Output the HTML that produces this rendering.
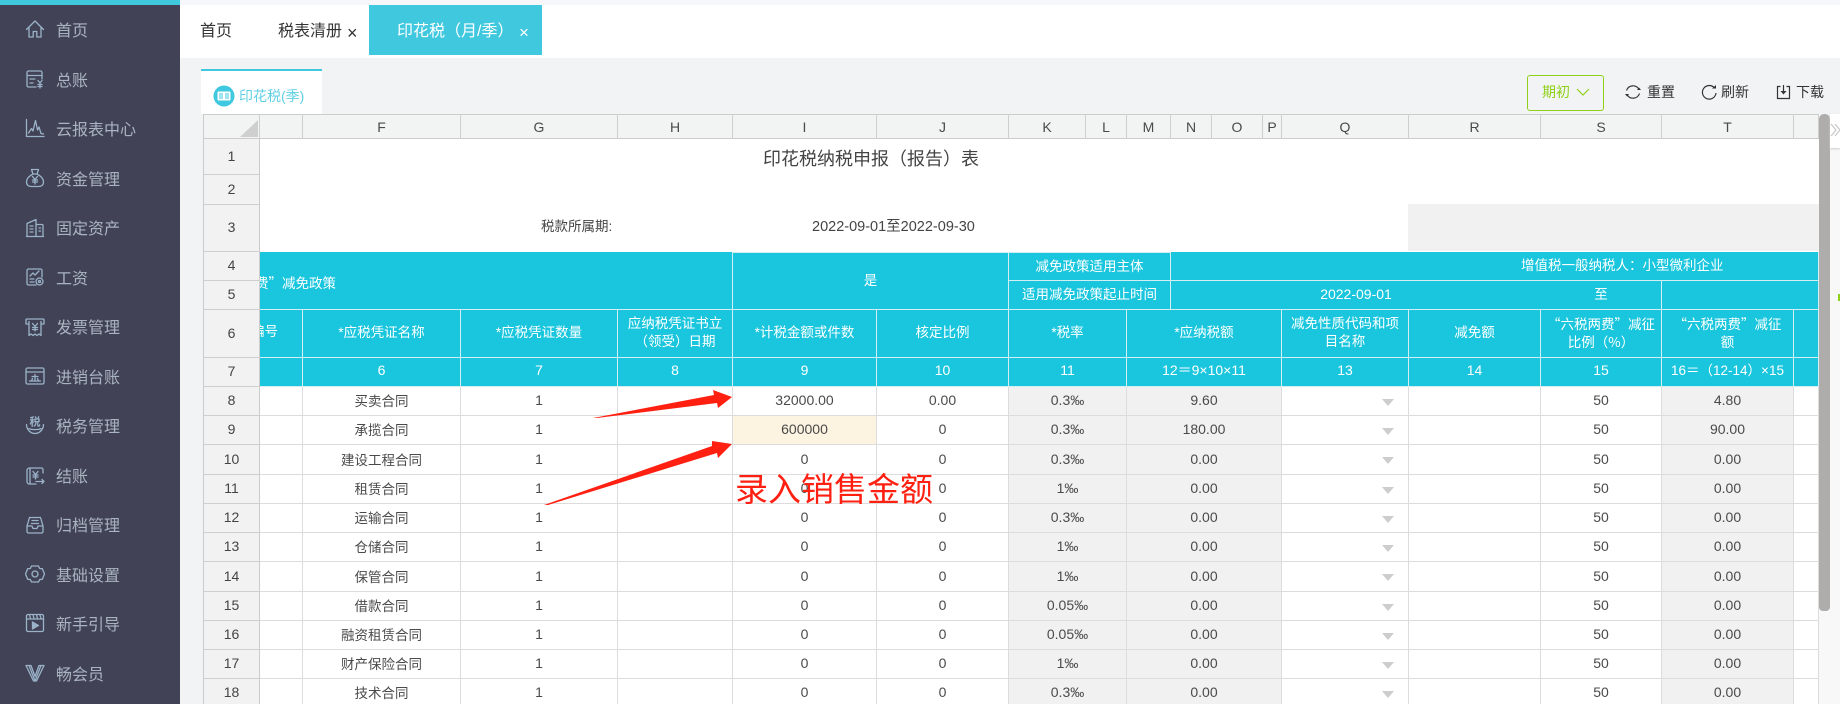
<!DOCTYPE html>
<html lang="zh-CN">
<head>
<meta charset="utf-8">
<title>印花税纳税申报（报告）表</title>
<style>
html,body{margin:0;padding:0;width:1840px;height:704px;overflow:hidden;background:#f2f3f5;font-family:"Liberation Sans","Noto Sans CJK SC",sans-serif;color:#444}
.abs{position:absolute;white-space:nowrap}
#side{position:absolute;left:0;top:0;width:180px;height:704px;background:#424256}
#side .top{position:absolute;left:0;top:0;width:180px;height:5px;background:#3fc8de}
#side span{position:absolute;left:56px;font-size:16px;line-height:24px;color:#aab4c0;white-space:nowrap}
#side svg{position:absolute;left:25px;width:20px;height:20px;fill:none;stroke:#9ab3c8;stroke-width:1.3;stroke-linejoin:round;stroke-linecap:round}
#topstrip{position:absolute;left:180px;top:0;width:1660px;height:5px;background:#f6f7fb}
#tabs{position:absolute;left:180px;top:5px;width:1660px;height:53px;background:#fff}
.tab{font-size:16px;line-height:22px;color:#333}
#active{position:absolute;left:369px;top:5px;width:173px;height:50px;background:#40c8df}
#subtab{position:absolute;left:201px;top:69px;width:121px;height:45px;background:#fff;border-top:2px solid #40c8df;box-sizing:border-box}
.btn{font-size:14px;line-height:20px;color:#333}
#grid{position:absolute;left:203px;top:114px;width:1616px;height:590px;overflow:hidden;background:#fff}
table{border-collapse:separate;border-spacing:0;table-layout:fixed;width:1616px}
td{box-sizing:border-box;padding:0 0 2px 0;border-right:1px solid #dcdcdc;border-bottom:1px solid #dcdcdc;text-align:center;font-size:14px;color:#4a4a4a;background:#fff;overflow:hidden;white-space:nowrap}
td.r{background:#f2f2f2;border-left:1px solid #cccccc;border-right:1px solid #cccccc;border-bottom:1px solid #cfcfcf;font-size:14px;color:#444}
tr.h td{background:#f2f3f3;border-top:1px solid #cccccc;border-right:1px solid #cfcfcf;border-bottom:1px solid #cccccc;font-size:14px;padding-bottom:0}
td.t{background:#1ac6dd;color:#fff;border-right:1px solid #d3eff4;border-bottom:1px solid #d3eff4;font-size:13.5px;line-height:17.5px;white-space:normal}
td.p0{padding-bottom:0}
td.q6{font-family:"Noto Sans CJK SC",sans-serif}
td.tt{border-top:1px solid #d3eff4}
td.n{border:0;background:#fff}
td.g{background:#f1f1f1}
td.c{font-size:13.5px}
td.y{background:#fcf3e0}
td.q{text-align:right;padding-right:14px;padding-bottom:0}
td.q i{display:inline-block;width:0;height:0;border-left:6px solid transparent;border-right:6px solid transparent;border-top:7px solid #cdcdcd;vertical-align:middle}
.w{color:#fff;font-size:13.5px;line-height:20px}
</style>
</head>
<body>
<div id="side">
  <div class="top"></div>
  <svg style="top:19px" viewBox="0 0 20 20"><path d="M1.500 10.500L10 2l8.500 8.500M4 8.500V18h4.200v-5.500h3.600V18H16V8.500"/></svg><span style="top:20px">首页</span>
  <svg style="top:69px" viewBox="0 0 20 20"><path d="M17 10V3.500A1.500 1.500 0 0 0 15.500 2h-12A1.500 1.500 0 0 0 2 3.500v13A1.500 1.500 0 0 0 3.500 18H11M2 6.500h15M5 10h5M5 14h3M13 11.500l2 2.500 2-2.500M15 14v5M13 15.500h4M13 17.500h4"/></svg><span style="top:70px">总账</span>
  <svg style="top:118px" viewBox="0 0 20 20"><path d="M1.500 1.500v17H19M3.500 15L6.500 10.500 8 13 10.500 2.500 12.500 12 14 9l2 6.500 2.500.5"/></svg><span style="top:119px">云报表中心</span>
  <svg style="top:168px" viewBox="0 0 20 20"><path d="M6.500 1.500h7L12 6H8zM8 6C4 8 1.500 11 1.500 14c0 3 2 4.500 5 4.500h7c3 0 5-1.500 5-4.500 0-3-2.500-6-6.500-8M7.500 8.500L10 11.500l2.500-3M10 11.500V16M7.500 12h5M7.500 14h5"/></svg><span style="top:169px">资金管理</span>
  <svg style="top:218px" viewBox="0 0 20 20"><path d="M2 18.500V5.500L11 1.500v17M1.500 18.500h17M11 6.500h6a1 1 0 0 1 1 1v11M5 8h3M5 11h3M5 14h3M14 10h1.500M14 13h1.500"/></svg><span style="top:218px">固定资产</span>
  <svg style="top:267px" viewBox="0 0 20 20"><path d="M17 10V3.500A1.500 1.500 0 0 0 15.500 2h-12A1.500 1.500 0 0 0 2 3.500v13A1.500 1.500 0 0 0 3.500 18H11M5 9l3-3 2 2 4-4M5 12h4M5 15h4"/><circle cx="14.500" cy="14.500" r="3.500"/><circle cx="14.500" cy="14.500" r="1"/></svg><span style="top:268px">工资</span>
  <svg style="top:317px" viewBox="0 0 20 20"><path d="M1 7V3a1 1 0 0 1 1-1h16a1 1 0 0 1 1 1v4M1 7h3M16 7h3M4 4.500V18.500l2-1.500 2 1.500 2-1.500 2 1.500 2-1.500 2 1.500V4.500M7.500 6.500L10 9.500l2.500-3M10 9.500v4.500M7.500 10.500h5M7.500 12.500h5"/></svg><span style="top:317px">发票管理</span>
  <svg style="top:366px" viewBox="0 0 20 20"><rect x="1" y="2" width="18" height="16" rx="1.500"/><path d="M1 6h18M10 8.500v6M7 10.500h6M4.500 15h11M7.500 12.500l-1 2.500M12.500 12.500l1 2.500"/></svg><span style="top:367px">进销台账</span>
  <svg style="top:415px" viewBox="0 0 20 20"><text x="10" y="10.500" text-anchor="middle" font-size="11" font-weight="700" fill="#9ab3c8" stroke="none" font-family="Noto Sans CJK SC">税</text><path d="M1.500 9.500c0 5 4 9 8.500 9s8.500-4 8.500-9M4 13.500c2 1.500 10 1.500 12 0"/></svg><span style="top:416px">税务管理</span>
  <svg style="top:466px" viewBox="0 0 20 20"><path d="M18 7V3.500A1.500 1.500 0 0 0 16.500 2H4.500A2.500 2.500 0 0 0 2 4.500v11A2.500 2.500 0 0 0 4.500 18H11M5 2v16M8 5.500l2.500 3 2.500-3M10.500 8.500V13M8 9h5M8 11h5M11 15.500h8M17 13.500l2 2-2 2"/></svg><span style="top:466px">结账</span>
  <svg style="top:515px" viewBox="0 0 20 20"><path d="M2 11L4.500 2.500h11L18 11v5.500a1.500 1.500 0 0 1-1.500 1.500h-13A1.500 1.500 0 0 1 2 16.500zM2 11h5l1 2.500h4l1-2.500h5M7 5.500h6M6.500 8.500h7"/></svg><span style="top:515px">归档管理</span>
  <svg style="top:564px" viewBox="0 0 20 20"><path d="M6.500 2h7l1.200 2.500 2.600.2L19.500 10l-2.200 5.300-2.600.2L13.500 18h-7l-1.200-2.500-2.600-.2L.5 10l2.200-5.300 2.600-.2z"/><circle cx="10" cy="10" r="3"/></svg><span style="top:565px">基础设置</span>
  <svg style="top:613px" viewBox="0 0 20 20"><rect x="1.500" y="1.500" width="17" height="17" rx="1.500"/><path d="M1.500 6h17M4.500 2l1 3.500M8 2l1 3.500M11.500 2l1 3.500M15 2l1 3.500"/><path d="M7.500 9l6 3.500-6 3.500z" fill="#9ab3c8"/></svg><span style="top:614px">新手引导</span>
  <svg style="top:663px" viewBox="0 0 20 20"><path d="M1 2.500h5l4 11 4-11h5L11.500 18h-3zM4 2.500L10 18M16 2.500L10 18"/></svg><span style="top:664px">畅会员</span>
</div>
<div id="topstrip"></div>
<div id="tabs"></div>
<div class="abs tab" style="left:200px;top:21px">首页</div>
<div class="abs tab" style="left:278px;top:21px">税表清册</div>
<div class="abs tab" style="left:347px;top:22px;font-size:18px">×</div>
<div id="active"></div>
<div class="abs tab" style="left:397px;top:21px;color:#fff">印花税（月/季）</div>
<div class="abs tab" style="left:519px;top:22px;color:#fff;font-size:17px">×</div>

<div id="subtab"></div>
<svg class="abs" style="left:213px;top:85px" width="22" height="22" viewBox="0 0 22 22"><circle cx="11" cy="11" r="10.500" fill="#40c8df"/><rect x="4.500" y="6.500" width="13" height="9" rx="1" fill="#fff"/><path d="M6 9h4M6 11h4M6 13h4M12 9h4M12 11h4M12 13h4" stroke="#40c8df" stroke-width="1"/></svg>
<div class="abs" style="left:239px;top:86px;font-size:14px;line-height:20px;color:#5fd0e4">印花税(季)</div>

<div class="abs" style="left:1527px;top:75px;width:77px;height:36px;box-sizing:border-box;border:1px solid #8fd118;border-radius:3px"></div>
<div class="abs btn" style="left:1542px;top:82px;color:#8fd118">期初</div>
<svg class="abs" style="left:1576px;top:87px" width="14" height="10" viewBox="0 0 14 10"><path d="M1 2l6 6 6-6" fill="none" stroke="#8fd118" stroke-width="1.200"/></svg>
<svg class="abs" style="left:1624px;top:83px" width="18" height="18" viewBox="0 0 18 18" fill="none" stroke="#333" stroke-width="1.200"><path d="M2.500 7.500A6.800 6.800 0 0 1 15 6.500M15.500 10.500A6.800 6.800 0 0 1 3 11.500"/><path d="M13 7h4l-2-2.500z M1 11h4l-2 2.500z" fill="#333" stroke="none"/></svg>
<div class="abs btn" style="left:1647px;top:82px">重置</div>
<svg class="abs" style="left:1701px;top:84px" width="16" height="16" viewBox="0 0 16 16" fill="none" stroke="#333" stroke-width="1.200"><path d="M13.500 4A6.800 6.800 0 1 0 15 9"/><path d="M11 4.500h4V1z" fill="#333" stroke="none"/></svg>
<div class="abs btn" style="left:1721px;top:82px">刷新</div>
<svg class="abs" style="left:1776px;top:84px" width="15" height="16" viewBox="0 0 15 16" fill="none" stroke="#333" stroke-width="1.200"><path d="M4.500 2.500H1.500v12h12v-12h-3M7.500 1v8"/><path d="M4.500 7h6l-3 3.500z" fill="#333" stroke="none"/></svg>
<div class="abs btn" style="left:1796px;top:82px">下载</div>

<div class="abs" style="left:1819px;top:148px;width:21px;height:556px;background:#f8f8f9"></div>
<div id="grid">
<table>
<colgroup><col style="width:57px"><col style="width:43px"><col style="width:158px"><col style="width:157px"><col style="width:115px"><col style="width:144px"><col style="width:132px"><col style="width:77px"><col style="width:41px"><col style="width:44px"><col style="width:41px"><col style="width:51px"><col style="width:19px"><col style="width:127px"><col style="width:132px"><col style="width:121px"><col style="width:132px"><col style="width:25px"></colgroup>
<tr class="h" style="height:25px"><td class="r" style="border-top:1px solid #ccc;border-bottom:1px solid #ccc"></td><td></td><td>F</td><td>G</td><td>H</td><td>I</td><td>J</td><td>K</td><td>L</td><td>M</td><td>N</td><td>O</td><td>P</td><td>Q</td><td>R</td><td>S</td><td>T</td><td></td></tr>
<tr style="height:36px"><td class="r">1</td><td class="n" colspan="17" rowspan="3"></td></tr>
<tr style="height:30px"><td class="r">2</td></tr>
<tr style="height:47px"><td class="r">3</td></tr>
<tr style="height:29px"><td class="r">4</td><td class="t" colspan="4" rowspan="2"></td><td class="t tt p0" colspan="2" rowspan="2">是</td><td class="t tt p0" colspan="3">减免政策适用主体</td><td class="t" colspan="8"></td></tr>
<tr style="height:29px"><td class="r">5</td><td class="t p0" colspan="3">适用减免政策起止时间</td><td class="t p0" colspan="5" style="font-size:14px;border-right:0">2022-09-01</td><td class="t p0">至</td><td class="t" colspan="2"></td></tr>
<tr style="height:48px"><td class="r">6</td><td class="t"></td><td class="t">*应税凭证名称</td><td class="t">*应税凭证数量</td><td class="t">应纳税凭证书立<br>（领受）日期</td><td class="t">*计税金额或件数</td><td class="t">核定比例</td><td class="t" colspan="2">*税率</td><td class="t" colspan="4">*应纳税额</td><td class="t">减免性质代码和项<br>目名称</td><td class="t">减免额</td><td class="t q6">“六税两费”减征<br>比例（%）</td><td class="t q6">“六税两费”减征<br>额</td><td class="t"></td></tr>
<tr style="height:29px"><td class="r">7</td><td class="t"></td><td class="t" style="font-size:14px">6</td><td class="t" style="font-size:14px">7</td><td class="t" style="font-size:14px">8</td><td class="t" style="font-size:14px">9</td><td class="t" style="font-size:14px">10</td><td class="t" colspan="2" style="font-size:14px">11</td><td class="t" colspan="4" style="font-size:14px">12＝9×10×11</td><td class="t" style="font-size:14px">13</td><td class="t" style="font-size:14px">14</td><td class="t" style="font-size:14px">15</td><td class="t" style="font-size:13.5px">16＝（12-14）×15</td><td class="t"></td></tr>
<tr style="height:29px"><td class="r">8</td><td></td><td class="c">买卖合同</td><td>1</td><td></td><td>32000.00</td><td>0.00</td><td class="g" colspan="2">0.3‰</td><td class="g" colspan="4">9.60</td><td class="q"><i></i></td><td></td><td>50</td><td class="g">4.80</td><td></td></tr>
<tr style="height:29px"><td class="r">9</td><td></td><td class="c">承揽合同</td><td>1</td><td></td><td class="y">600000</td><td>0</td><td class="g" colspan="2">0.3‰</td><td class="g" colspan="4">180.00</td><td class="q"><i></i></td><td></td><td>50</td><td class="g">90.00</td><td></td></tr>
<tr style="height:30px"><td class="r">10</td><td></td><td class="c">建设工程合同</td><td>1</td><td></td><td>0</td><td>0</td><td class="g" colspan="2">0.3‰</td><td class="g" colspan="4">0.00</td><td class="q"><i></i></td><td></td><td>50</td><td class="g">0.00</td><td></td></tr>
<tr style="height:29px"><td class="r">11</td><td></td><td class="c">租赁合同</td><td>1</td><td></td><td>0</td><td>0</td><td class="g" colspan="2">1‰</td><td class="g" colspan="4">0.00</td><td class="q"><i></i></td><td></td><td>50</td><td class="g">0.00</td><td></td></tr>
<tr style="height:29px"><td class="r">12</td><td></td><td class="c">运输合同</td><td>1</td><td></td><td>0</td><td>0</td><td class="g" colspan="2">0.3‰</td><td class="g" colspan="4">0.00</td><td class="q"><i></i></td><td></td><td>50</td><td class="g">0.00</td><td></td></tr>
<tr style="height:29px"><td class="r">13</td><td></td><td class="c">仓储合同</td><td>1</td><td></td><td>0</td><td>0</td><td class="g" colspan="2">1‰</td><td class="g" colspan="4">0.00</td><td class="q"><i></i></td><td></td><td>50</td><td class="g">0.00</td><td></td></tr>
<tr style="height:30px"><td class="r">14</td><td></td><td class="c">保管合同</td><td>1</td><td></td><td>0</td><td>0</td><td class="g" colspan="2">1‰</td><td class="g" colspan="4">0.00</td><td class="q"><i></i></td><td></td><td>50</td><td class="g">0.00</td><td></td></tr>
<tr style="height:29px"><td class="r">15</td><td></td><td class="c">借款合同</td><td>1</td><td></td><td>0</td><td>0</td><td class="g" colspan="2">0.05‰</td><td class="g" colspan="4">0.00</td><td class="q"><i></i></td><td></td><td>50</td><td class="g">0.00</td><td></td></tr>
<tr style="height:29px"><td class="r">16</td><td></td><td class="c">融资租赁合同</td><td>1</td><td></td><td>0</td><td>0</td><td class="g" colspan="2">0.05‰</td><td class="g" colspan="4">0.00</td><td class="q"><i></i></td><td></td><td>50</td><td class="g">0.00</td><td></td></tr>
<tr style="height:29px"><td class="r">17</td><td></td><td class="c">财产保险合同</td><td>1</td><td></td><td>0</td><td>0</td><td class="g" colspan="2">1‰</td><td class="g" colspan="4">0.00</td><td class="q"><i></i></td><td></td><td>50</td><td class="g">0.00</td><td></td></tr>
<tr style="height:29px"><td class="r">18</td><td></td><td class="c">技术合同</td><td>1</td><td></td><td>0</td><td>0</td><td class="g" colspan="2">0.3‰</td><td class="g" colspan="4">0.00</td><td class="q"><i></i></td><td></td><td>50</td><td class="g">0.00</td><td></td></tr>
</table>
</div>

<svg class="abs" style="left:204px;top:115px" width="55" height="23" viewBox="0 0 55 23"><path d="M36 22L54 5v17z" fill="#cfcfcf"/></svg>
<div class="abs" style="left:1408px;top:204px;width:411px;height:47px;background:#f1f1f1"></div>
<div class="abs" style="left:763px;top:147px;font-size:18px;line-height:24px;color:#444">印花税纳税申报（报告）表</div>
<div class="abs" style="left:541px;top:217px;font-size:13.500px;line-height:20px;color:#444">税款所属期:</div>
<div class="abs" style="left:812px;top:217px;font-size:14.500px;line-height:20px;color:#444">2022-09-01至2022-09-30</div>

<div class="abs" style="left:260px;top:252px;width:76px;height:57px;overflow:hidden"><span class="w abs" style="right:0;top:20px;font-family:'Noto Sans CJK SC',sans-serif">“六税两费”减免政策</span></div>
<div class="abs" style="left:260px;top:310px;width:18px;height:46px;overflow:hidden"><span class="w abs" style="right:0;top:12px">编号</span></div>
<div class="abs w" style="left:1521px;top:256px">增值税一般纳税人：小型微利企业</div>

<div class="abs" style="left:1819px;top:114px;width:11px;height:497px;background:#aeadab;border-radius:5px 5px 4px 4px"></div>
<div class="abs" style="left:1830px;top:114px;width:10px;height:34px;background:#fff;box-shadow:0 1px 2px #ccc"></div>
<svg class="abs" style="left:1830px;top:122px" width="10" height="16" viewBox="0 0 10 16" fill="none" stroke="#c8c8c8" stroke-width="1.200"><path d="M1 2l5 6-5 6M5 2l5 6-5 6"/></svg>
<div class="abs" style="left:1838px;top:294px;width:2px;height:7px;background:#8fd118"></div>

<svg class="abs" style="left:0;top:0;pointer-events:none" width="1840" height="704" viewBox="0 0 1840 704">
<path d="M593 418L714 395 713 390 732 397 718 408 717 403 597 418z" fill="#ff2012"/>
<path d="M544 505L712 446 712 441 732 444 718 458 717 453 548 505z" fill="#ff2012"/>
</svg>
<div class="abs" style="left:735px;top:468px;font-size:33px;line-height:44px;color:#ff2012">录入销售金额</div>
</body>
</html>
